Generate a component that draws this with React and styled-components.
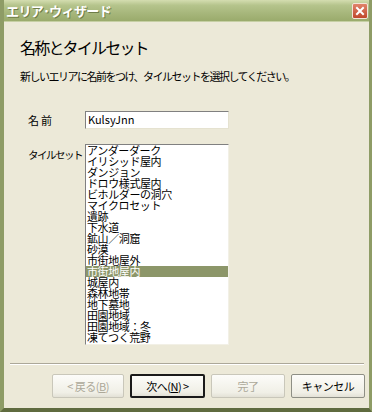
import React from "react";
import styled, { createGlobalStyle } from "styled-components";

const Global = createGlobalStyle`
  html, body { margin: 0; padding: 0; background: #ECE9D8; }
  body { font-family: "Noto Sans CJK JP", "Noto Sans", sans-serif; }
`;

const Window = styled.div`
  width: 372px;
  height: 412px;
  box-sizing: border-box;
  display: flex;
  flex-direction: column;
  background: #ECE9D8;
  border-left: 4px solid #8E9C66;
  border-right: 3px solid #8E9C66;
  border-bottom: 4px solid #5F6B3F;
  overflow: hidden;
`;

const TitleBar = styled.div`
  height: 21px;
  margin: 0 -3px 0 -4px;
  display: flex;
  align-items: center;
  justify-content: space-between;
  padding: 0 4px 0 6px;
  background: linear-gradient(to bottom, #D4DDB0 0%, #B5C48C 25%, #A4B478 70%, #9AAB6C 100%);
  border-bottom: 1px solid #C6CFA4;
`;

const TitleText = styled.span`
  color: #fff;
  font-size: 13px;
  font-weight: bold;
  letter-spacing: -0.6px;
  text-shadow: 1px 1px 0 #6F7D48;
`;

const CloseBtn = styled.div`
  width: 14px;
  height: 14px;
  border-radius: 2px;
  background: linear-gradient(#E0836A, #C0482C);
  border: 1px solid #F3E3D8;
  display: flex;
  align-items: center;
  justify-content: center;
`;

const Content = styled.div`
  flex: 1;
  display: flex;
  flex-direction: column;
  padding: 14px 0 0 16px;
`;

const Heading = styled.h1`
  margin: 0;
  font-size: 16px;
  font-weight: normal;
  line-height: 22px;
  color: #000;
  letter-spacing: -1.8px;
`;

const Subtitle = styled.p`
  margin: 11px 0 0 0;
  font-size: 11px;
  line-height: 14px;
  letter-spacing: -1.5px;
  color: #000;
`;

const Form = styled.div`
  margin: 28px 0 0 8px;
  display: grid;
  grid-template-columns: 57px 144px;
  row-gap: 15px;
  align-items: start;
`;

const Label = styled.div`
  font-size: ${(p) => p.$fs || 11}px;
  line-height: 14px;
  white-space: nowrap;
  letter-spacing: ${(p) => p.$ls || 0}px;
  padding-top: ${(p) => p.$pt || 0}px;
  color: #000;
`;

const Input = styled.div`
  height: 18px;
  box-sizing: border-box;
  background: #fff;
  border: 1px solid;
  border-color: #808080 #E5E2D0 #E5E2D0 #808080;
  font-size: 11px;
  line-height: 15px;
  padding-left: 2px;
  color: #000;
`;

const List = styled.div`
  height: 201px;
  box-sizing: border-box;
  background: #fff;
  border: 1px solid;
  border-color: #808080 #F2F0E6 #F2F0E6 #808080;
  overflow: hidden;
`;

const Item = styled.div`
  height: 11px;
  line-height: 11px;
  font-size: 11px;
  letter-spacing: -0.4px;
  padding-left: 1px;
  white-space: nowrap;
  color: ${(p) => (p.$sel ? "#fff" : "#000")};
  background: ${(p) => (p.$sel ? "#8C9669" : "transparent")};
`;

const Separator = styled.div`
  margin: 18px 5px 0 6px;
  height: 0;
  border-top: 1px solid #ACA899;
  border-bottom: 1px solid #fff;
`;

const ButtonRow = styled.div`
  display: flex;
  justify-content: flex-end;
  gap: 6px;
  padding: 9px 4px 0 0;
`;

const Button = styled.button`
  width: ${(p) => p.$w || 74}px;
  height: 24px;
  box-sizing: border-box;
  font-family: "Noto Sans CJK JP", "Noto Sans", sans-serif;
  font-size: 11px;
  letter-spacing: -0.5px;
  padding: 0;
  border-radius: 2px;
  color: ${(p) => (p.$disabled ? "#ACA899" : "#000")};
  background: linear-gradient(#FCFCF9, #F0EFE6 80%, #E3E1D6);
  border: ${(p) => (p.$def ? "2px solid #1A1A1A" : "1px solid")};
  border-color: ${(p) => (p.$def ? "#1A1A1A" : p.$disabled ? "#C9C7BA" : "#8E8F85")};
`;

const items = [
  "アンダーダーク",
  "イリシッド屋内",
  "ダンジョン",
  "ドロウ様式屋内",
  "ビホルダーの洞穴",
  "マイクロセット",
  "遺跡",
  "下水道",
  "鉱山／洞窟",
  "砂漠",
  "市街地屋外",
  "市街地屋内",
  "城屋内",
  "森林地帯",
  "地下墓地",
  "田園地域",
  "田園地域：冬",
  "凍てつく荒野",
];

export default function App() {
  return (
    <>
      <Global />
      <Window>
        <TitleBar>
          <TitleText>エリア･ウィザード</TitleText>
          <CloseBtn>
            <svg width="10" height="10" viewBox="0 0 10 10">
              <path d="M2 2 L8 8 M8 2 L2 8" stroke="#fff" strokeWidth="2" strokeLinecap="square" />
            </svg>
          </CloseBtn>
        </TitleBar>
        <Content>
          <Heading>名称とタイルセット</Heading>
          <Subtitle>新しいエリアに名前をつけ、タイルセットを選択してください。</Subtitle>
          <Form>
            <Label $pt={2} $ls={2}>名前</Label>
            <Input>KulsyJnn</Input>
            <Label $pt={4} $fs={10.5} $ls={-1.5}>タイルセット</Label>
            <List>
              {items.map((t) => (
                <Item key={t} $sel={t === "市街地屋内"}>{t}</Item>
              ))}
            </List>
          </Form>
        </Content>
        <Separator />
        <ButtonRow>
          <Button $disabled $w={72}>&lt; 戻る(<u>B</u>)</Button>
          <Button $def $w={75}>次へ(<u>N</u>) &gt;</Button>
          <Button $disabled>完了</Button>
          <Button>キャンセル</Button>
        </ButtonRow>
        <div style={{ height: 10 }} />
      </Window>
    </>
  );
}
